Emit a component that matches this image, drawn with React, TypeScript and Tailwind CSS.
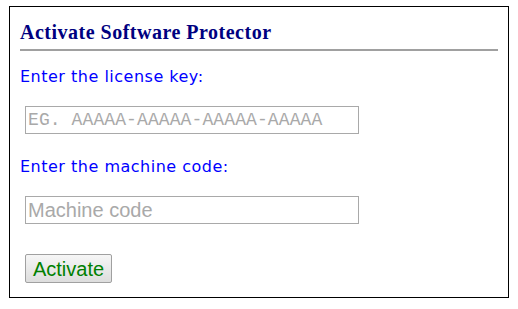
export default function App() {
  return (
    <div className="w-[518px] h-[309px] bg-white pt-[6px] pl-[9px]">
      <div className="flex flex-col w-[500px] h-[292px] border border-black px-[10px] pt-[12px]">
        <h2 className="font-['Liberation_Serif',serif] text-[20px] leading-[26px] font-bold tracking-[0.5px] text-[#000080]">
          Activate Software Protector
        </h2>
        <div className="mt-[4px] h-[2px] bg-[#a0a0a0]" />
        <div className="flex flex-col items-start font-['DejaVu_Sans',Verdana,sans-serif]">
          <p className="mt-[16px] text-[16px] leading-[20px] tracking-[0.5px] text-[#0000ff]">Enter the license key:</p>
          <input
            className="mt-[19px] ml-[5px] w-[334px] h-[28px] border border-[#a9a9a9] px-[2px] font-['Liberation_Mono',monospace] text-[18px] tracking-[0.1px] outline-none placeholder:text-[#a9a9a9]"
            placeholder="EG. AAAAA-AAAAA-AAAAA-AAAAA"
          />
          <p className="mt-[23px] text-[16px] leading-[20px] tracking-[0.5px] text-[#0000ff]">Enter the machine code:</p>
          <input
            className="mt-[19px] ml-[5px] w-[334px] h-[28px] border border-[#a9a9a9] px-[2px] font-['Liberation_Sans',Arial,sans-serif] text-[20px] outline-none placeholder:text-[#a9a9a9]"
            placeholder="Machine code"
          />
          <button className="mt-[30px] ml-[5px] w-[87px] h-[29px] rounded-[2px] border border-[#a0a0a0] bg-gradient-to-b from-[#f6f6f6] to-[#dddddd] font-['Liberation_Sans',Arial,sans-serif] text-[20px] leading-[26px] text-[#008000]">
            Activate
          </button>
        </div>
      </div>
    </div>
  );
}
